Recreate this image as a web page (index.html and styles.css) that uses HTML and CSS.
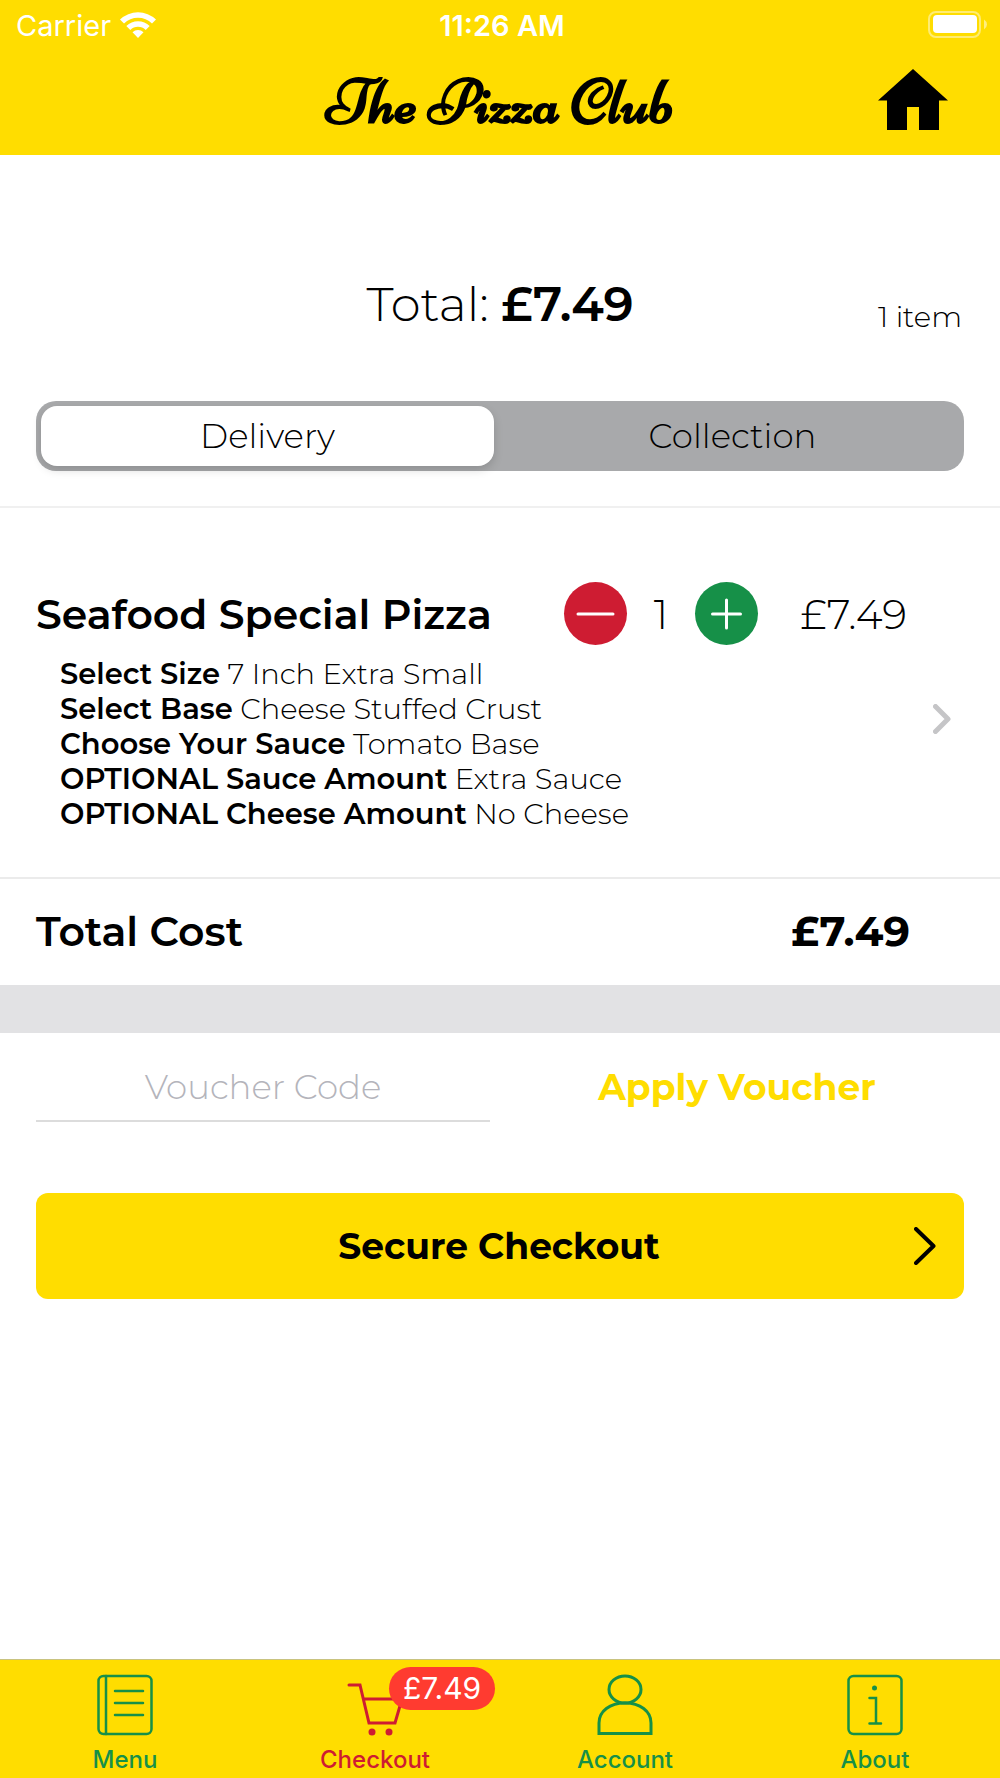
FILE: index.html
```
<!DOCTYPE html>
<html lang="en">
<head>
  <meta charset="utf-8">
  <meta name="viewport" content="width=device-width, initial-scale=1">
  <title>The Pizza Club</title>
  <link rel="stylesheet" href="styles.css">
</head>
<body>
  <header class="header">
    <div class="status">
      <div class="status-carrier">
        <span>Carrier</span>
        <svg class="wifi" width="38" height="28" viewBox="0 0 38 28" aria-hidden="true">
          <path d="M1 8.500 A26 26 0 0 1 37 8.500 L33 12.500 A20 20 0 0 0 5 12.500 Z M7.300 15 A17 17 0 0 1 30.700 15 L26.700 19 A11 11 0 0 0 11.300 19 Z M13.500 21.300 A8 8 0 0 1 24.500 21.300 L19 27 Z" fill="#fff"/>
        </svg>
      </div>
      <time class="status-time">11:26 AM</time>
      <svg class="battery" width="60" height="28" viewBox="0 0 60 28" aria-hidden="true">
        <rect x="1" y="1" width="51" height="25" rx="7" fill="none" stroke="#fff" stroke-opacity=".45" stroke-width="2"/>
        <rect x="5" y="4" width="44" height="18" rx="4" fill="#fff"/>
        <path d="M56 8.500 Q59 10.500 59 13.500 T56 18.500 Z" fill="#fff" fill-opacity=".5"/>
      </svg>
    </div>
    <div class="navbar">
      <h1 class="brand">The Pizza Club</h1>
      <a class="home" href="#home" aria-label="Home">
        <svg width="70" height="61" viewBox="0 0 70 61" aria-hidden="true">
          <path d="M35 0 L70 31.500 H61 V61 H41 V38 H29 V61 H9 V31.500 H0 Z"/>
        </svg>
      </a>
    </div>
  </header>

  <main class="main">
    <section class="summary">
      <p class="summary-total">Total: <strong>£7.49</strong></p>
      <p class="summary-count">1 item</p>
    </section>

    <div class="segments" role="radiogroup" aria-label="Order type">
      <input class="segment-input" type="radio" name="order-type" id="delivery" checked>
      <label class="segment" for="delivery">Delivery</label>
      <input class="segment-input" type="radio" name="order-type" id="collection">
      <label class="segment" for="collection">Collection</label>
    </div>

    <article class="item">
      <div class="item-body">
        <div class="item-head">
          <h2 class="item-name">Seafood Special Pizza</h2>
          <div class="stepper">
            <button class="step step-minus" type="button" aria-label="Remove one">
              <svg width="63" height="63" viewBox="0 0 63 63" aria-hidden="true"><path d="M14 32 H49"/></svg>
            </button>
            <span class="quantity">1</span>
            <button class="step step-plus" type="button" aria-label="Add one">
              <svg width="63" height="63" viewBox="0 0 63 63" aria-hidden="true"><path d="M17.500 32 H45.500 M31.500 18 V46"/></svg>
            </button>
          </div>
          <span class="item-price">£7.49</span>
        </div>
        <ul class="options">
          <li><strong>Select Size</strong> 7 Inch Extra Small</li>
          <li><strong>Select Base</strong> Cheese Stuffed Crust</li>
          <li><strong>Choose Your Sauce</strong> Tomato Base</li>
          <li><strong>OPTIONAL Sauce Amount</strong> Extra Sauce</li>
          <li><strong>OPTIONAL Cheese Amount</strong> No Cheese</li>
        </ul>
      </div>
      <a class="item-link" href="#item" aria-label="Edit Seafood Special Pizza">
        <svg width="18" height="30" viewBox="0 0 18 30" aria-hidden="true">
          <path d="M2.500 2.500 L15 15 L2.500 27.500" fill="none" stroke="#c5c5c7" stroke-width="5" stroke-linecap="round" stroke-linejoin="round"/>
        </svg>
      </a>
    </article>

    <div class="cost">
      <span>Total Cost</span>
      <strong>£7.49</strong>
    </div>

    <form class="voucher">
      <input class="voucher-input" type="text" placeholder="Voucher Code" aria-label="Voucher Code">
      <button class="voucher-apply" type="button">Apply Voucher</button>
    </form>

    <button class="checkout" type="button">
      <span class="checkout-label">Secure Checkout</span>
      <svg width="22" height="38" viewBox="0 0 22 38" aria-hidden="true">
        <path d="M2 2 L19.500 19 L2 36" fill="none" stroke="#000" stroke-width="4" stroke-linecap="round" stroke-linejoin="round"/>
      </svg>
    </button>
  </main>

  <nav class="tabs">
    <a class="tab" href="#menu">
      <svg width="56" height="62" viewBox="0 0 56 62" aria-hidden="true">
        <rect x="1.500" y="2" width="53" height="58" rx="5"/>
        <path d="M9 2 V60 M18 17 H46 M18 29 H46 M18 41 H46"/>
      </svg>
      <span>Menu</span>
    </a>
    <a class="tab tab-active" href="#checkout">
      <svg width="56" height="62" viewBox="0 0 56 62" aria-hidden="true">
        <path class="bold" d="M2 11 H13 L22 49 H48 L55 25 H17"/>
        <circle class="dot" cx="25" cy="58" r="3.500"/>
        <circle class="dot" cx="42" cy="58" r="3.500"/>
      </svg>
      <span>Checkout</span>
      <span class="badge">£7.49</span>
    </a>
    <a class="tab" href="#account">
      <svg width="56" height="62" viewBox="0 0 56 62" aria-hidden="true">
        <ellipse class="bold" cx="28" cy="15.500" rx="16" ry="13.500"/>
        <path class="bold" d="M2 59.500 V49 C2 37 13 29 28 29 S54 37 54 49 V59.500 Z"/>
      </svg>
      <span>Account</span>
    </a>
    <a class="tab" href="#about">
      <svg width="56" height="62" viewBox="0 0 56 62" aria-hidden="true">
        <rect x="1.500" y="2" width="53" height="58" rx="5"/>
        <circle class="dot" cx="27.500" cy="14" r="2.500"/>
        <path d="M22.500 24 H29 V49 M22.500 49.500 H34"/>
      </svg>
      <span>About</span>
    </a>
  </nav>
</body>
</html>
```
FILE: styles.css
```
* {
  box-sizing: border-box;
}

body {
  display: flex;
  flex-direction: column;
  min-height: 100vh;
  margin: 0;
  background: #fff;
  color: #000;
  font-family: Montserrat, Inter, "Open Sans", sans-serif;
  font-weight: 300;
}

h1, h2, p, ul {
  margin: 0;
  padding: 0;
}

strong {
  font-weight: 600;
}

svg {
  display: block;
}

input, button {
  margin: 0;
  padding: 0;
  border: 0;
  background: none;
  color: inherit;
  font: inherit;
}

.header {
  background: #ffdd00;
}

.status {
  display: grid;
  grid-template-columns: 1fr auto 1fr;
  align-items: center;
  height: 50px;
  padding: 0 12px 0 16px;
  color: #fff;
  font-family: Inter, sans-serif;
  font-size: 29px;
  font-weight: 400;
}

.status-carrier {
  display: flex;
  align-items: center;
  gap: 8px;
}

.status-time {
  font-weight: 600;
}

.battery {
  justify-self: end;
}

.navbar {
  display: grid;
  grid-template-columns: 1fr auto 1fr;
  align-items: center;
  height: 105px;
  padding: 0 52px 6px;
}

.brand {
  grid-column: 2;
  padding-top: 6px;
  font-family: Niconne, Playball, Lobster, "Liberation Serif", serif;
  font-size: 64px;
  font-weight: 700;
  line-height: 72px;
}

.home {
  justify-self: end;
}

.main {
  flex: 1;
}

.summary {
  display: grid;
  grid-template-columns: 1fr auto 1fr;
  padding: 119px 38px 67px;
}

.summary-total {
  grid-column: 2;
  font-size: 48px;
  line-height: 60px;
}

.summary-count {
  align-self: end;
  justify-self: end;
  font-size: 29px;
  line-height: 35px;
}

.segments {
  display: grid;
  grid-template-columns: 1fr 1fr;
  gap: 12px;
  margin: 0 36px 35px;
  padding: 5px;
  border-radius: 20px;
  background: #a8a9ab;
}

.segment-input {
  position: absolute;
  width: 1px;
  height: 1px;
  opacity: 0;
}

.segment {
  border-radius: 16px;
  font-size: 34px;
  line-height: 60px;
  text-align: center;
}

.segment-input:checked + .segment {
  background: #fff;
  box-shadow: 0 4px 10px rgba(0, 0, 0, 0.15);
}

.item {
  display: flex;
  align-items: center;
  gap: 26px;
  padding: 74px 49px 46px 36px;
  border-top: 2px solid #f0f0f0;
  border-bottom: 2px solid #ebebeb;
}

.item-body {
  flex: 1;
}

.item-head {
  display: flex;
  align-items: center;
}

.item-name {
  flex: 1;
  font-size: 41px;
  font-weight: 600;
  line-height: 52px;
}

.stepper {
  display: flex;
  align-items: center;
  justify-content: space-between;
  width: 194px;
}

.step {
  border-radius: 50%;
}

.step svg {
  fill: none;
  stroke: #fff;
  stroke-width: 3;
  stroke-linecap: round;
}

.step-minus {
  background: #ce1c32;
}

.step-plus {
  background: #169048;
}

.quantity, .item-price {
  font-size: 41px;
  line-height: 52px;
}

.item-price {
  width: 149px;
  text-align: right;
}

.options {
  margin-top: 11px;
  padding-left: 24px;
  font-size: 29px;
  line-height: 35px;
  list-style: none;
}

.item-link {
  padding-top: 24px;
}

.cost {
  display: flex;
  justify-content: space-between;
  padding: 26px 90px 28px 36px;
  border-bottom: 48px solid #e2e2e4;
  font-size: 41px;
  font-weight: 600;
  line-height: 52px;
}

.cost strong {
  font-size: 42px;
  font-weight: 700;
}

.voucher {
  display: grid;
  grid-template-columns: 1fr 1fr;
  gap: 20px;
  padding: 20px 36px 0;
  font-size: 34px;
}

.voucher-input {
  min-width: 0;
  height: 69px;
  border-bottom: 2px solid #dcdcdc;
  text-align: center;
}

.voucher-input::placeholder {
  color: #b4b4bb;
  opacity: 1;
}

.voucher-apply {
  padding-bottom: 2px;
  color: #ffdd00;
  font-size: 36px;
  font-weight: 700;
}

.checkout {
  display: flex;
  align-items: center;
  width: calc(100% - 72px);
  height: 106px;
  margin: 71px 36px 40px;
  padding: 0 28px 0 48px;
  border-radius: 12px;
  background: #ffdd00;
  font-size: 36px;
  font-weight: 700;
}

.checkout-label {
  flex: 1;
  text-align: center;
}

.tabs {
  display: grid;
  grid-template-columns: repeat(4, 1fr);
  padding: 14px 0 3px;
  border-top: 1px solid #c9c37f;
  background: #ffdd00;
  font-family: Inter, sans-serif;
  font-size: 24px;
  font-weight: 500;
  line-height: 30px;
}

.tab {
  position: relative;
  display: flex;
  flex-direction: column;
  align-items: center;
  gap: 9px;
  color: #169048;
  text-decoration: none;
}

.tab-active {
  color: #ce1c32;
}

.tab svg {
  fill: none;
  stroke: currentColor;
  stroke-width: 2.5;
  stroke-linecap: round;
  overflow: visible;
}

.tab .bold {
  stroke-width: 3;
}

.tab .dot {
  fill: currentColor;
  stroke: none;
}

.badge {
  position: absolute;
  top: -7px;
  left: calc(50% + 14px);
  padding: 0 14px;
  border-radius: 22px;
  background: #ff3b30;
  color: #fff;
  font-size: 30px;
  font-weight: 400;
  line-height: 43px;
}
```
